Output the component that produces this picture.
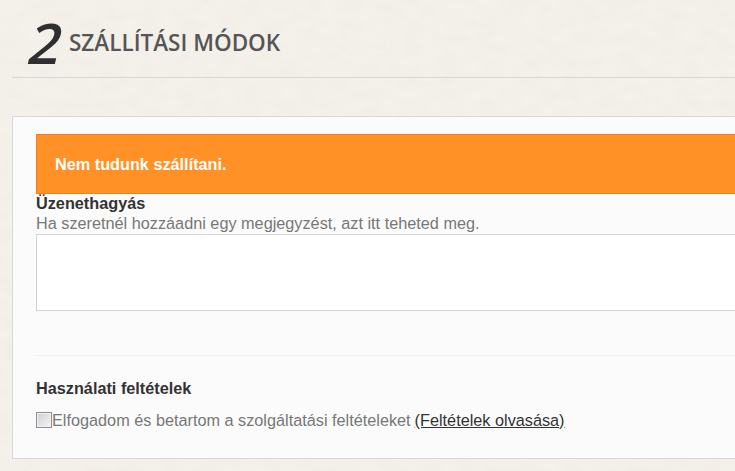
<style>
:global(body) { margin: 0; background: #f4f0ea; overflow: hidden; }
.texture { position: absolute; left: 0; top: 0; width: 735px; height: 471px; z-index: 0; }
.page { position: relative; z-index: 1; width: 735px; height: 471px; overflow: hidden; font-family: "Liberation Sans", Arial, sans-serif; font-size: 16.25px; box-sizing: border-box; padding: 0 0 0 12px; }
.head { height: 77px; border-bottom: 1px solid #d9d7d3; display: flex; align-items: flex-start; padding-left: 15px; box-sizing: content-box; font-family: "Open Sans", sans-serif; width: 760px; }
.num { font-size: 56px; line-height: 56px; font-weight: 600; color: #2f2f2f; margin-top: 14px; margin-left: -1px; width: 43px; display: block; transform: skewX(-14deg); transform-origin: 10px 47px; }
h2 { margin: 28px 0 0; font-size: 22.5px; line-height: 30px; font-weight: 600; color: #555; text-transform: uppercase; }
.card { margin-top: 38px; width: 800px; height: 343px; box-sizing: border-box; background: #fbfbfb; border: 1px solid #d8d8d8; padding: 17px 23px 0; }
.alert { height: 60px; box-sizing: border-box; background: #ff9126; border: 1px solid #f57f20; color: #fff; font-weight: bold; display: flex; align-items: center; padding-left: 18px; }
.label { font-weight: bold; color: #333; line-height: 20px; margin-top: -1px; }
.help { color: #777; line-height: 20px; margin-bottom: 1px; }
.ta { display: block; width: 100%; height: 77px; box-sizing: border-box; background: #fff; border: 1px solid #d3d3d3; margin: 0; padding: 0; resize: none; }
hr { border: 0; border-top: 1px solid #f0f0f0; margin: 44px 0 0; }
h3 { margin: 23px 0 0; font-size: 16.25px; line-height: 18px; font-weight: bold; color: #333; }
.check { display: flex; align-items: center; margin-top: 13px; color: #777; line-height: 20px; }
.box { width: 16px; height: 16px; box-sizing: border-box; border: 1px solid #8e8e8e; background: linear-gradient(135deg, #d0d0d5, #f4f4f6); box-shadow: inset 0 0 0 1px #f2f2f2; flex: none; }
a { color: #333; text-decoration: underline; margin-left: 4px; }
</style>

<svg class="texture" aria-hidden="true">
  <filter id="paper">
    <feTurbulence type="fractalNoise" baseFrequency="0.05 0.09" numOctaves="3" seed="4" />
    <feColorMatrix values="0 0 0 0 0.6  0 0 0 0 0.55  0 0 0 0 0.48  0 0 0 0.12 -0.04" />
  </filter>
  <rect width="735" height="471" filter="url(#paper)" />
</svg>
<div class="page">
  <div class="head">
    <span class="num">2</span>
    <h2>Szállítási módok</h2>
  </div>
  <div class="card">
    <div class="alert">Nem tudunk szállítani.</div>
    <div class="label">Üzenethagyás</div>
    <div class="help">Ha szeretnél hozzáadni egy megjegyzést, azt itt teheted meg.</div>
    <textarea class="ta"></textarea>
    <hr />
    <h3>Használati feltételek</h3>
    <div class="check"><span class="box"></span><span>Elfogadom és betartom a szolgáltatási feltételeket</span><a href="#terms">(Feltételek olvasása)</a></div>
  </div>
</div>
